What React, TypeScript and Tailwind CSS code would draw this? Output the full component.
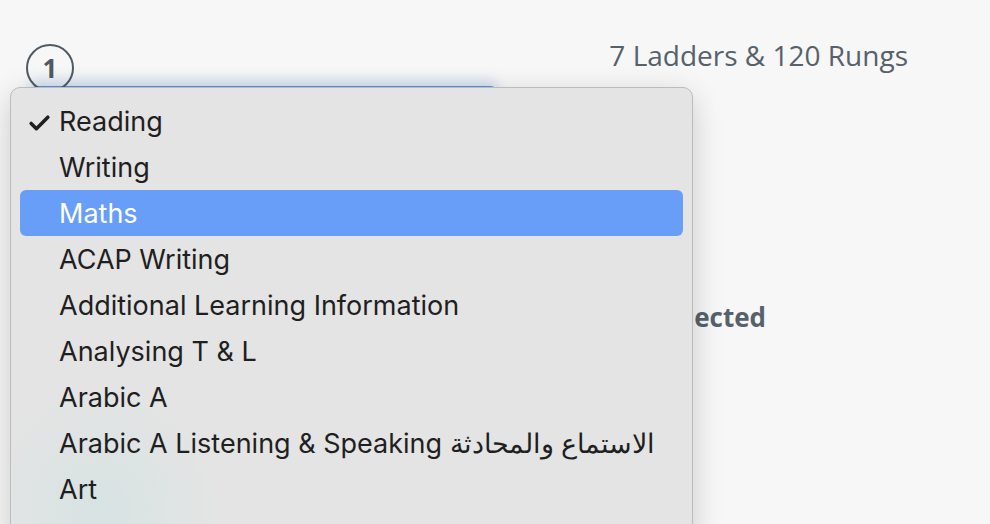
import { Check } from "lucide-react";

const subjects = [
  "Reading",
  "Writing",
  "Maths",
  "ACAP Writing",
  "Additional Learning Information",
  "Analysing T & L",
  "Arabic A",
  "Arabic A Listening & Speaking الاستماع والمحادثة",
  "Art",
];

export default function App() {
  const selected = "Reading";
  const hovered = "Maths";

  return (
    <main className="relative h-[524px] w-[990px] overflow-hidden bg-[#f7f7f7] font-['Open_Sans',sans-serif] text-[#56616b]">
      {/* page behind the menu */}
      <div className="flex items-start justify-between pl-[26px] pr-[82px] pt-[44px]">
        <div className="flex h-[48px] w-[48px] items-center justify-center rounded-full border-2 border-[#4f5a63] text-[26px] font-bold text-[#4f5a63]">
          1
        </div>
        <div className="text-[28px] leading-[22px]">7 Ladders &amp; 120 Rungs</div>
      </div>
      <div className="ml-[30px] mt-[-6px] h-[40px] w-[467px] rounded-t-md border-t-2 border-[#5b93d8] shadow-[0_-6px_12px_rgba(91,147,216,0.25)]" />
      <div className="mt-[176px] flex w-[766px] justify-end text-[26px] font-bold leading-[30px]">Nothing selected</div>

      {/* native select menu */}
      <div className="absolute left-[10px] top-[87px] h-[460px] w-[683px] rounded-[10px] border border-[#bcbcbc] bg-[#e4e4e4] bg-[radial-gradient(circle_at_90px_420px,rgba(200,225,225,0.45),transparent_120px)] px-[9px] pt-[10px] shadow-[0_8px_30px_rgba(0,0,0,0.18)] font-['Inter',sans-serif]">
        <ul>
          {subjects.map((s) => (
            <li
              key={s}
              className={
                s === hovered
                  ? "relative flex h-[46px] items-center rounded-[6px] bg-[#699ef8] pl-[39px] pt-[3px] text-[27px] text-white"
                  : "relative flex h-[46px] items-center pl-[39px] pt-[3px] text-[27px] text-[#1f1f1f]"
              }
            >
              {s === selected && (
                <Check className="absolute left-[7px] top-[13px] h-[25px] w-[25px]" strokeWidth={3.4} />
              )}
              <span className="whitespace-nowrap font-['Inter','Noto_Sans',sans-serif]">{s}</span>
            </li>
          ))}
        </ul>
      </div>
    </main>
  );
}
